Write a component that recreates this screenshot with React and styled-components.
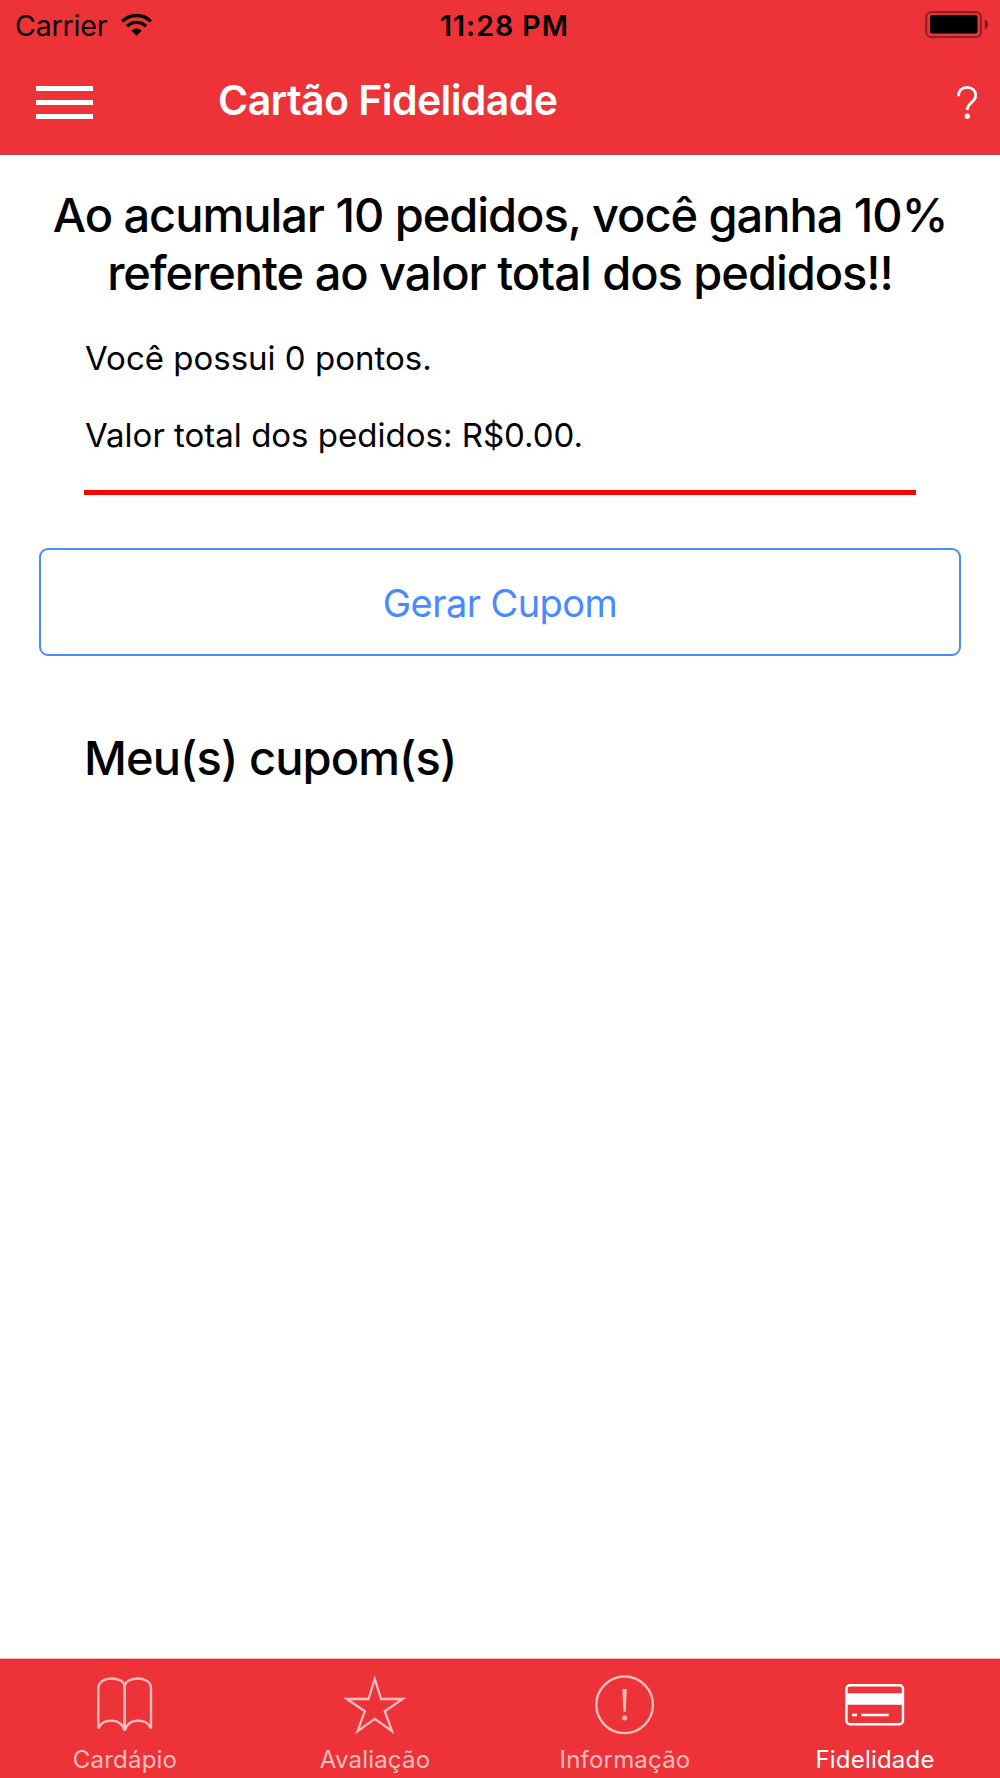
import React from "react";
import styled, { createGlobalStyle } from "styled-components";

const GlobalStyle = createGlobalStyle`
  * {
    box-sizing: border-box;
  }
  body {
    margin: 0;
    background: white;
    font-family: Inter, "Liberation Sans", sans-serif;
    color: black;
  }
  svg {
    display: block;
    overflow: visible;
  }
`;

const Screen = styled.div`
  display: flex;
  flex-direction: column;
  width: 1000px;
  height: 1778px;
  background: white;
`;

const Header = styled.header`
  height: 155px;
  background: #ed3338;
  border-bottom: 1px solid #c2434a;
`;

const StatusBar = styled.div`
  display: grid;
  grid-template-columns: 1fr auto 1fr;
  align-items: center;
  height: 51px;
  padding: 0 12px 0 15px;
`;

const Carrier = styled.div`
  display: flex;
  align-items: center;
  gap: 14px;
  font-size: 28.5px;
  letter-spacing: -0.15px;

  svg {
    margin-bottom: 2px;
  }
`;

const Clock = styled.div`
  margin-left: 6px;
  font-size: 28.5px;
  font-weight: 600;
  letter-spacing: 1px;
`;

const Battery = styled.div`
  justify-self: end;
  padding-bottom: 1px;
`;

const NavBar = styled.div`
  display: flex;
  align-items: center;
  height: 102px;
  padding: 0 23px 0 36px;
`;

const MenuButton = styled.button`
  display: flex;
  flex-direction: column;
  gap: 9px;
  width: 57px;
  margin-right: 125px;
  padding: 1px 0 0;
  border: 0;
  background: transparent;
`;

const MenuBar = styled.span`
  height: 5px;
  background: white;
`;

const NavTitle = styled.h1`
  flex: 1;
  margin: 0;
  padding-bottom: 4px;
  font-size: 41px;
  font-weight: 600;
  line-height: 50px;
  letter-spacing: -0.58px;
  color: white;
`;

const Content = styled.main`
  flex: 1;
  padding: 31px 39px 0;
`;

const Heading = styled.h2`
  margin: 0;
  font-size: 47px;
  font-weight: 500;
  line-height: 58px;
  letter-spacing: ${(props) => (props.$center ? "-1.04px" : "-0.9px")};
  text-align: ${(props) => (props.$center ? "center" : "left")};
  white-space: nowrap;
`;

const Summary = styled.div`
  margin: 36px 45px 0;
  padding-bottom: 35px;
  border-bottom: 5px solid #ff0000;
`;

const Info = styled.p`
  margin: 0 0 37px;
  padding-left: 1px;
  font-size: 33px;
  line-height: 40px;
  letter-spacing: 0;

  &:last-child {
    margin-bottom: 0;
  }
`;

const CouponButton = styled.button`
  display: block;
  width: 100%;
  height: 108px;
  margin: 53px 0 73px;
  padding: 2px 0 0;
  border: 2px solid #488aff;
  border-radius: 9px;
  background: transparent;
  font-family: inherit;
  font-size: 38px;
  letter-spacing: -0.58px;
  color: #488aff;
`;

const Coupons = styled.section`
  padding: 0 45px;
`;

const TabBar = styled.nav`
  display: flex;
  height: 119px;
  border-top: 1px solid #d32a33;
  box-shadow: 0 -1px 0 #f6bcc0;
  background: #ed3338;
`;

const Tab = styled.a`
  flex: 1;
  display: flex;
  flex-direction: column;
  align-items: center;
  padding-top: 14px;
  color: ${(props) => (props.$active ? "#ffffff" : "#fbbcbe")};
`;

const TabLabel = styled.span`
  margin-top: 9px;
  font-size: 24px;
  line-height: 30px;
  letter-spacing: 0.2px;
`;

const WifiIcon = () => (
  <svg width="31" height="22" viewBox="0 0 31 22" fill="none">
    <path d="M1.2 7.4a20.4 20.4 0 0 1 28.6 0" stroke="black" strokeWidth="3.4" />
    <path d="M6 12.2a13.6 13.6 0 0 1 19 0" stroke="black" strokeWidth="3.4" />
    <path d="M10.3 16.6a7.4 7.4 0 0 1 10.4 0L15.5 21.8z" fill="black" />
  </svg>
);

const BatteryIcon = () => (
  <svg width="63" height="28" viewBox="0 0 63 28">
    <rect x="1.2" y="1.2" width="54.8" height="24.8" rx="5" fill="none" stroke="#8f2226" strokeWidth="2.2" />
    <rect x="5" y="4" width="47.5" height="18.5" rx="2.5" fill="black" />
    <path d="M59.8 8.500c2.400.8 3.200 3 3.200 5s-.8 4.200-3.200 5z" fill="#7a1c20" />
  </svg>
);

const HelpIcon = () => (
  <svg width="20" height="33" viewBox="0 0 20 33" fill="none">
    <path
      d="M1.4 10.2C1.4 4.6 4.8 1.3 10 1.3s8.6 3.4 8.6 8.2c0 7-8.4 7-8.4 14.5"
      stroke="white"
      strokeWidth="2.8"
    />
    <circle cx="10.3" cy="30.2" r="2.7" fill="white" />
  </svg>
);

const BookIcon = () => (
  <svg width="62" height="62" viewBox="0 0 62 62" fill="none" stroke="currentColor" strokeWidth="2.4">
    <path d="M30.7 56V13C30.7 7 24 4.5 17.5 4.5S4.300 7.500 4.300 14.500V54.500c3-7 8-7.700 14-7.700 6 0 11 4 12.400 10" />
    <path d="M30.7 56V13C30.7 7 37.500 4.500 44 4.500s13 3 13 10V54.500c-3-7-8-7.700-14-7.700-6 0-11 4-12.300 10" />
  </svg>
);

const StarIcon = () => (
  <svg width="62" height="62" viewBox="0 0 62 62" fill="none" stroke="currentColor" strokeWidth="2.3">
    <path d="M30.8 5L24.500 25H2.800L20.800 37.200 13.600 57.200 30.800 44.800 48 57.200 40.800 37.200 58.800 25H37.100z" />
  </svg>
);

const AlertIcon = () => (
  <svg width="62" height="62" viewBox="0 0 62 62" fill="none">
    <circle cx="30.6" cy="30.8" r="28.3" stroke="currentColor" strokeWidth="2.4" />
    <path d="M28.4 15h4.4l-1 22.7h-2.4z" fill="currentColor" />
    <circle cx="30.6" cy="44" r="2.5" fill="currentColor" />
  </svg>
);

const CardIcon = () => (
  <svg width="62" height="62" viewBox="0 0 62 62" fill="none">
    <rect x="2.4" y="11.2" width="56.6" height="39" rx="3.5" stroke="currentColor" strokeWidth="2.4" />
    <path d="M3 19.3h56V30.8H3z" fill="currentColor" />
    <path d="M8 41h5M17 41h27.7" stroke="currentColor" strokeWidth="2.4" />
  </svg>
);

const tabs = [
  { label: "Cardápio", icon: BookIcon },
  { label: "Avaliação", icon: StarIcon },
  { label: "Informação", icon: AlertIcon },
  { label: "Fidelidade", icon: CardIcon, active: true },
];

const App = () => (
  <>
    <GlobalStyle />
    <Screen>
      <Header>
        <StatusBar>
          <Carrier>
            Carrier
            <WifiIcon />
          </Carrier>
          <Clock>11:28 PM</Clock>
          <Battery>
            <BatteryIcon />
          </Battery>
        </StatusBar>
        <NavBar>
          <MenuButton>
            <MenuBar />
            <MenuBar />
            <MenuBar />
          </MenuButton>
          <NavTitle>Cartão Fidelidade</NavTitle>
          <HelpIcon />
        </NavBar>
      </Header>
      <Content>
        <Heading $center>
          Ao acumular 10 pedidos, você ganha 10%
          <br />
          referente ao valor total dos pedidos!!
        </Heading>
        <Summary>
          <Info>Você possui 0 pontos.</Info>
          <Info>Valor total dos pedidos: R$0.00.</Info>
        </Summary>
        <CouponButton>Gerar Cupom</CouponButton>
        <Coupons>
          <Heading>Meu(s) cupom(s)</Heading>
        </Coupons>
      </Content>
      <TabBar>
        {tabs.map(({ label, icon: Icon, active }) => (
          <Tab key={label} $active={active}>
            <Icon />
            <TabLabel>{label}</TabLabel>
          </Tab>
        ))}
      </TabBar>
    </Screen>
  </>
);

export default App;
